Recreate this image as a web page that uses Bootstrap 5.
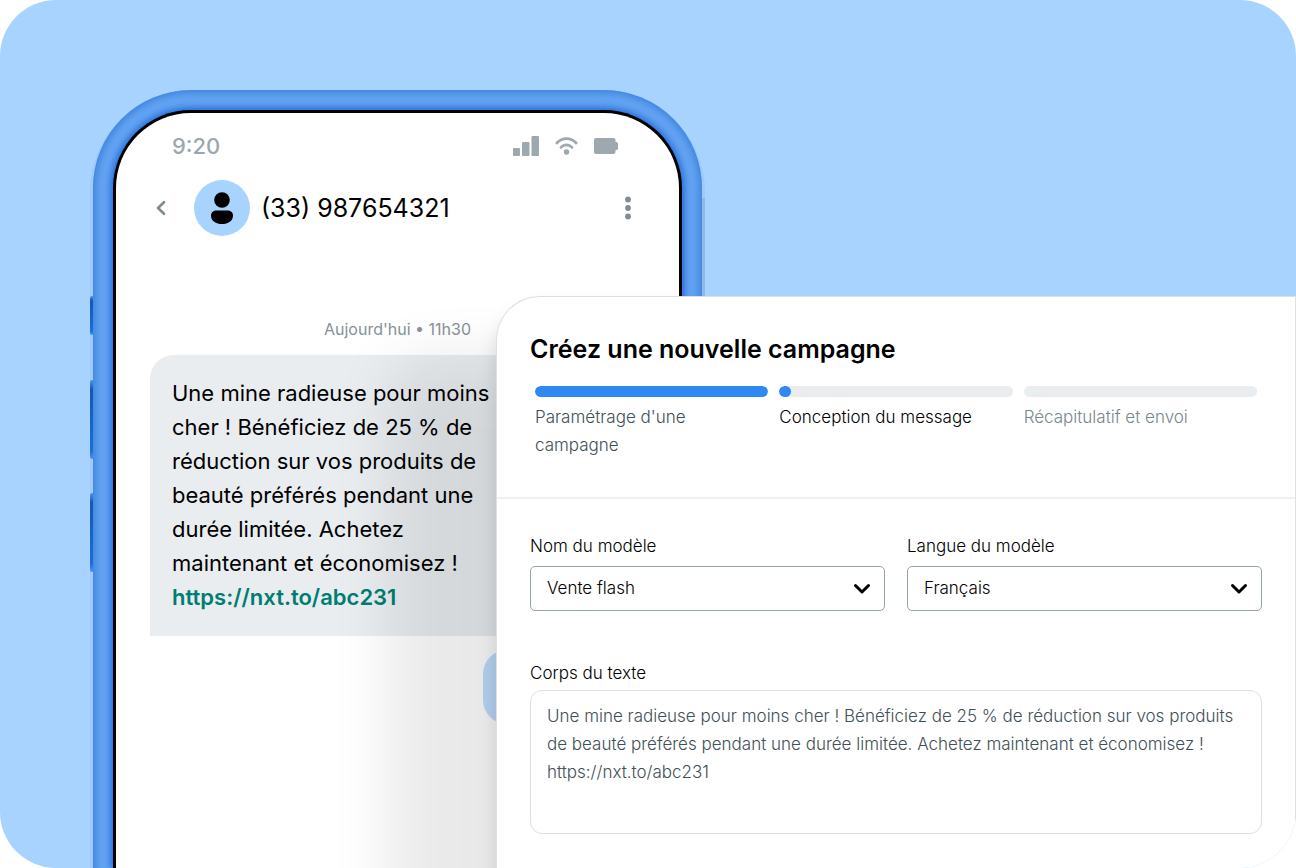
<!DOCTYPE html>
<html lang="fr">
<head>
<meta charset="utf-8">
<meta name="viewport" content="width=device-width, initial-scale=1">
<title>Créez une nouvelle campagne</title>
<link href="https://cdn.jsdelivr.net/npm/bootstrap@5.3.0/dist/css/bootstrap.min.css" rel="stylesheet">
<style>
  body { font-family: Inter, "Liberation Sans", sans-serif; color: #000; background: #fff; }

  .stage {
    display: grid;
    grid-template-columns: 93px 403px 206px minmax(0, 1fr);
    grid-template-rows: 90px 206px 1fr;
    min-height: 100vh;
    border-radius: 56px;
    background: #a8d3ff;
  }

  /* Phone */
  .phone {
    grid-area: 2 / 2 / 4 / 4;
    padding: 20px 20px 0;
    border-radius: 98px 98px 0 0;
    background: #68a6f4;
    box-shadow: -3px 3px 0 #a0caf5, 3px 3px 0 #a0caf5;
  }
  .phone::before {
    content: "";
    position: absolute;
    inset: 0 0 -30px;
    border-radius: 98px 98px 0 0;
    box-shadow: inset 0 0 10px 3px #3a80da;
  }
  .side-key { position: absolute; left: -3px; width: 3px; border-radius: 2px 0 0 2px; background: linear-gradient(#4a98f0, #1458b4 12%, #1a6fdc 90%, #4a98f0); }
  .key-mute { top: 206px; height: 39px; }
  .key-up { top: 290px; height: 79px; }
  .key-down { top: 403px; height: 79px; }
  .key-power { position: absolute; right: -3px; top: 108px; bottom: 0; width: 3px; background: #90b9e6; }
  .screen {
    border: solid #000;
    border-width: 3px 3px 0;
    border-radius: 78px 78px 0 0;
    background: #fff;
    box-shadow: 0 0 8px 2px #1764cf;
  }
  .screen-shade {
    position: absolute;
    top: 183px;
    left: 380px;
    right: -100px;
    bottom: -200px;
    border-radius: 44px 0 0 0;
    box-shadow: -108px 60px 60px rgba(0, 0, 0, .085), 0 14px 20px rgba(0, 0, 0, .13);
  }
  .screen-clip { border-radius: 75px 75px 0 0; }
  .status { padding: 19px 61px 0 56px; height: 50px; color: #9ba7ae; font-size: 22px; line-height: 28px; font-weight: 500; }
  .contact { padding: 11px 48px 0 34px; height: 78px; }
  .icon-btn { border: 0; background: none; padding: 0; line-height: 0; color: #808c93; }
  .avatar { width: 56px; height: 56px; background: #a8d3ff; margin-left: 22px; }
  .number { font-size: 25px; line-height: 32px; margin-left: 11px; }
  .day { margin-top: 74px; font-size: 16px; line-height: 28px; color: #869298; }
  .bubble-in {
    margin: 12px 34px 0;
    padding: 21px 22px 22px;
    border-radius: 24px 24px 24px 0;
    background: #e9edf0;
    font-size: 22px;
    line-height: 34px;
  }
  .bubble-in a { color: #007d73; font-weight: 600; text-decoration: none; }
  .bubble-out { width: 162px; height: 74px; margin: 14px 34px 0 auto; border-radius: 24px; background: #bfdfff; }

  /* Campaign panel */
  .panel {
    grid-area: 3 / 3 / 4 / 5;
    z-index: 2;
    background: #fff;
    border: solid #dae1e5;
    border-width: 1px 1px 0;
    border-radius: 44px 0 0 0;
    font-size: 17px;
    font-weight: 300;
    line-height: 28px;
  }
  .panel-head { padding: 34px 33px 0; height: 202px; border-bottom: 2px solid #eff1f2; }
  .panel-title { font-size: 25px; line-height: 36px; font-weight: 600; margin: 0 0 19px; }
  .steps { margin: 0 5px; display: grid; grid-template-columns: repeat(3, minmax(0, 1fr)); gap: 11px; padding: 0; list-style: none; }
  .steps .progress { height: 11px; border-radius: 6px; background: #e9edf0; margin-bottom: 6px; }
  .steps .progress-bar { border-radius: 6px; background: #2e89f2; }
  .step-done { color: #414f57; max-width: 180px; }
  .step-next { color: #78868d; }
  .panel-body { padding: 33px 33px 34px; }
  .panel .form-label { margin: 0 0 6px; line-height: 28px; }
  .panel .form-select {
    height: 45px;
    padding: 0 40px 0 16px;
    border: 1px solid #95a3aa;
    border-radius: 5px;
    font-size: 17px;
    font-weight: 300;
    color: #000;
    background-image: url("data:image/svg+xml,%3csvg xmlns='http://www.w3.org/2000/svg' viewBox='0 0 18 12'%3e%3cpath fill='none' stroke='%23000' stroke-width='3' stroke-linecap='round' stroke-linejoin='round' d='M2.5 2.5 9 9 15.5 2.5'/%3e%3c/svg%3e");
    background-size: 18px 12px;
    background-position: right 13px center;
  }
  .panel textarea.form-control {
    height: 144px;
    padding: 11px 16px;
    border: 1px solid #dae1e5;
    border-radius: 12px;
    color: #414f57;
    font-size: 17px;
    font-weight: 300;
    line-height: 28px;
    resize: none;
  }
  .body-field { margin-top: 48px; }
  .panel .body-field .form-label { margin-bottom: 3px; }
</style>
</head>
<body>
<main class="stage overflow-hidden">

  <section class="phone position-relative d-flex" aria-label="Aperçu du SMS">
    <span class="side-key key-mute"></span>
    <span class="side-key key-up"></span>
    <span class="side-key key-down"></span>
    <span class="key-power"></span>
    <div class="screen position-relative flex-grow-1">
      <div class="status d-flex justify-content-between align-items-start">
        <span>9:20</span>
        <span class="d-flex align-items-center gap-3 pt-1">
          <svg width="26" height="20" viewBox="0 0 26 20" fill="#9da8af"><rect y="12" width="7" height="8" rx="1"/><rect x="9" y="6" width="7.500" height="14" rx="1"/><rect x="18.500" width="7.500" height="20" rx="1"/></svg>
          <svg width="23" height="20" viewBox="0 0 24 20" fill="none" stroke="#9da8af" stroke-width="2.800" stroke-linecap="round"><path d="M1.900 6.900C7.500.8 16.500.8 22.100 6.900"/><path d="M6.200 11.500c3.300-3.500 8.300-3.500 11.600 0"/><circle cx="12" cy="16.200" r="2.800" fill="#9da8af" stroke="none"/></svg>
          <svg width="24" height="16" viewBox="0 0 24 16" fill="#9da8af"><rect width="21.500" height="16" rx="2"/><rect x="18" y="4" width="6" height="8" rx="1.500"/></svg>
        </span>
      </div>
      <div class="contact d-flex align-items-center">
        <button class="icon-btn" type="button" aria-label="Retour"><svg width="22" height="16" viewBox="0 0 22 16" fill="none" stroke="currentColor" stroke-width="2.700" stroke-linecap="round" stroke-linejoin="round"><path d="M14 2.200 8 8l6 5.800"/></svg></button>
        <span class="avatar rounded-circle d-flex align-items-center justify-content-center">
          <svg width="24" height="32" viewBox="0 0 24 32"><circle cx="12" cy="8" r="7.800"/><path d="M6.500 18.500h11c3.800 0 5.500 2.500 5.500 5.200 0 5.200-5 8.300-11 8.300S1 28.900 1 23.700c0-2.700 1.700-5.200 5.500-5.200z"/></svg>
        </span>
        <span class="number">(33) 987654321</span>
        <button class="icon-btn ms-auto" type="button" aria-label="Plus d’options"><svg width="6" height="24" viewBox="0 0 6 24" fill="currentColor"><circle cx="3" cy="3.500" r="2.900"/><circle cx="3" cy="12" r="2.900"/><circle cx="3" cy="20.500" r="2.900"/></svg></button>
      </div>
      <p class="day text-center mb-0">Aujourd'hui • 11h30</p>
      <div class="bubble-in">
        Une mine radieuse pour moins<br>cher ! Bénéficiez de 25 % de<br>réduction sur vos produits de<br>beauté préférés pendant une<br>durée limitée. Achetez<br>maintenant et économisez !<br><a href="https://nxt.to/abc231">https://nxt.to/abc231</a>
      </div>
      <div class="bubble-out"></div>
      <div class="screen-clip position-absolute top-0 start-0 w-100 h-100 overflow-hidden pe-none"><div class="screen-shade"></div></div>
    </div>
  </section>

  <section class="panel">
    <header class="panel-head">
      <h1 class="panel-title">Créez une nouvelle campagne</h1>
      <ol class="steps">
        <li>
          <div class="progress"><div class="progress-bar" style="width:100%"></div></div>
          <div class="step-done">Paramétrage d'une campagne</div>
        </li>
        <li aria-current="step">
          <div class="progress"><div class="progress-bar" style="width:5%"></div></div>
          <div>Conception du message</div>
        </li>
        <li>
          <div class="progress"></div>
          <div class="step-next">Récapitulatif et envoi</div>
        </li>
      </ol>
    </header>
    <form class="panel-body">
      <div class="row" style="--bs-gutter-x:22px">
        <div class="col-6">
          <label class="form-label" for="modele">Nom du modèle</label>
          <select class="form-select" id="modele"><option>Vente flash</option></select>
        </div>
        <div class="col-6">
          <label class="form-label" for="langue">Langue du modèle</label>
          <select class="form-select" id="langue"><option>Français</option></select>
        </div>
      </div>
      <div class="body-field">
        <label class="form-label" for="corps">Corps du texte</label>
        <textarea class="form-control" id="corps">Une mine radieuse pour moins cher ! Bénéficiez de 25 % de réduction sur vos produits
de beauté préférés pendant une durée limitée. Achetez maintenant et économisez !
https://nxt.to/abc231</textarea>
      </div>
    </form>
  </section>

</main>
<script src="https://cdn.jsdelivr.net/npm/bootstrap@5.3.0/dist/js/bootstrap.bundle.min.js"></script>
</body>
</html>
